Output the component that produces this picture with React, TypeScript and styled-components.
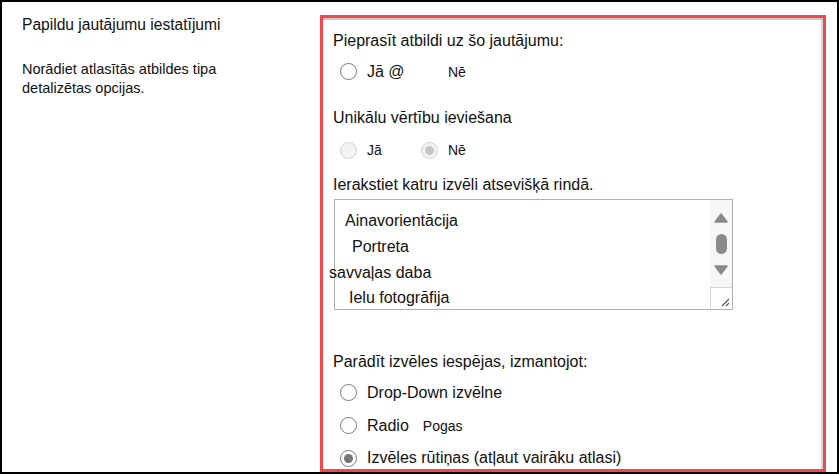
import React from "react";
import styled, { createGlobalStyle } from "styled-components";

const GlobalStyle = createGlobalStyle`
    html, body {
        margin: 0;
        padding: 0;
        background: #ffffff;
    }
    body {
        font-family: "Liberation Sans", Arial, sans-serif;
        color: #111111;
    }
`;

type Radio = { label: string; suffix?: string; checked?: boolean; disabled?: boolean };

const choiceLines = [
    { text: "Ainavorientācija", indent: 10 },
    { text: "Portreta", indent: 17 },
    { text: "savvaļas daba", indent: -6 },
    { text: "Ielu fotogrāfija", indent: 14 },
];

const displayOptions: Radio[] = [
    { label: "Drop-Down izvēlne" },
    { label: "Radio", suffix: "Pogas" },
    { label: "Izvēles rūtiņas (atļaut vairāku atlasi)", checked: true },
];

const App = () => {
    return (
        <>
            <GlobalStyle />
            <Frame>
                <Intro>
                    <IntroTitle>Papildu jautājumu iestatījumi</IntroTitle>
                    <IntroText>
                        Norādiet atlasītās atbildes tipa
                        <br />
                        detalizētas opcijas.
                    </IntroText>
                </Intro>
                <Highlight>
                    <Label top={13}>Pieprasīt atbildi uz šo jautājumu:</Label>
                    <RadioRow top={10}>
                        <RadioItem width={108}>
                            <RadioDot />
                            <span>Jā @</span>
                        </RadioItem>
                        <SmallText>Nē</SmallText>
                    </RadioRow>

                    <Label top={25}>Unikālu vērtību ieviešana</Label>
                    <RadioRow top={12}>
                        <RadioItem width={81}>
                            <RadioDot disabled />
                            <SmallText>Jā</SmallText>
                        </RadioItem>
                        <RadioItem>
                            <RadioDot disabled checked />
                            <SmallText>Nē</SmallText>
                        </RadioItem>
                    </RadioRow>

                    <Label top={14}>Ierakstiet katru izvēli atsevišķā rindā.</Label>
                    <ChoiceBox>
                        <ChoiceLines>
                            {choiceLines.map((line) => (
                                <ChoiceLine key={line.text} indent={line.indent}>
                                    {line.text}
                                </ChoiceLine>
                            ))}
                        </ChoiceLines>
                        <ScrollTrack>
                            <ScrollButtons>
                                <svg width="14" height="10" viewBox="0 0 14 10">
                                    <path d="M7 1 L13 9 L1 9 Z" fill="#8a8a8a" strokeLinejoin="round" stroke="#8a8a8a" strokeWidth="1.5" />
                                </svg>
                                <Thumb />
                                <svg width="14" height="10" viewBox="0 0 14 10">
                                    <path d="M1 1 L13 1 L7 9 Z" fill="#8a8a8a" strokeLinejoin="round" stroke="#8a8a8a" strokeWidth="1.5" />
                                </svg>
                            </ScrollButtons>
                            <Resizer>
                                <svg width="10" height="10" viewBox="0 0 10 10">
                                    <path d="M9 2 L2 9 M9 6 L6 9" stroke="#555" strokeWidth="1.2" />
                                </svg>
                            </Resizer>
                        </ScrollTrack>
                    </ChoiceBox>

                    <Label top={42}>Parādīt izvēles iespējas, izmantojot:</Label>
                    {displayOptions.map((opt, i) => (
                        <RadioRow key={opt.label} top={i === 0 ? 10 : 11}>
                            <RadioItem>
                                <RadioDot checked={opt.checked} />
                                <span>{opt.label}</span>
                                {opt.suffix && <SmallText style={{ marginLeft: 4 }}>{opt.suffix}</SmallText>}
                            </RadioItem>
                        </RadioRow>
                    ))}
                </Highlight>
            </Frame>
        </>
    );
};

export default App;

const Frame = styled.div`
    box-sizing: border-box;
    width: 839px;
    height: 474px;
    border: 2px solid #000;
    display: flex;
    overflow: hidden;
    background: #fff;
`;

const Intro = styled.div`
    width: 298px;
    padding: 13px 0 0 20px;
    flex-shrink: 0;
`;

const IntroTitle = styled.div`
    font-size: 15.6px;
    line-height: 20px;
`;

const IntroText = styled.div`
    margin-top: 25px;
    font-size: 14.5px;
    line-height: 19px;
`;

const Highlight = styled.div`
    box-sizing: border-box;
    width: 506px;
    margin-top: 13px;
    height: 457px;
    border: 3px solid #f3474b;
    box-shadow: inset 0 2px 0 #c8c8c8, inset -2px 0 0 #d6d6d6;
    padding-left: 10px;
    display: flex;
    flex-direction: column;
    align-items: flex-start;
    flex-shrink: 0;
`;

const Label = styled.div<{ top: number }>`
    margin-top: ${(p) => p.top}px;
    font-size: 16px;
    line-height: 20px;
`;

const RadioRow = styled.div<{ top: number }>`
    margin-top: ${(p) => p.top}px;
    height: 22px;
    padding-left: 7px;
    display: flex;
    align-items: center;
    font-size: 16px;
`;

const RadioItem = styled.div<{ width?: number }>`
    display: flex;
    align-items: center;
    gap: 10px;
    width: ${(p) => (p.width ? `${p.width}px` : "auto")};
`;

const SmallText = styled.span`
    font-size: 14px;
`;

const RadioDot = styled.span<{ checked?: boolean; disabled?: boolean }>`
    box-sizing: border-box;
    flex-shrink: 0;
    width: 17px;
    height: 17px;
    border-radius: 50%;
    border: 1.5px solid ${(p) => (p.disabled ? "#d0d0d0" : "#767676")};
    background: ${(p) => (p.disabled ? "#f3f3f3" : "#fff")};
    display: flex;
    align-items: center;
    justify-content: center;
    &::after {
        content: "";
        display: ${(p) => (p.checked ? "block" : "none")};
        width: 9px;
        height: 9px;
        border-radius: 50%;
        background: ${(p) => (p.disabled ? "#c4c4c4" : "#767676")};
    }
`;

const ChoiceBox = styled.div`
    box-sizing: border-box;
    margin-top: 4px;
    margin-left: 1px;
    width: 399px;
    height: 111px;
    border: 1px solid #b0b0b0;
    display: flex;
`;

const ChoiceLines = styled.div`
    flex: 1;
    padding-top: 9px;
    font-size: 16px;
`;

const ChoiceLine = styled.div<{ indent: number }>`
    height: 25.7px;
    line-height: 24px;
    margin-left: ${(p) => p.indent}px;
`;

const ScrollTrack = styled.div`
    width: 22px;
    display: flex;
    flex-direction: column;
    background: #f7f7f7;
`;

const ScrollButtons = styled.div`
    flex: 1;
    display: flex;
    flex-direction: column;
    align-items: center;
    padding-top: 13px;
    gap: 11px;
`;

const Thumb = styled.div`
    width: 11px;
    height: 20px;
    border-radius: 6px;
    background: #8a8a8a;
`;

const Resizer = styled.div`
    box-sizing: border-box;
    height: 22px;
    border-top: 1px solid #d4d4d4;
    border-left: 1px solid #d4d4d4;
    background: #fff;
    display: flex;
    align-items: flex-end;
    justify-content: flex-end;
    padding: 0 2px 2px 0;
`;
